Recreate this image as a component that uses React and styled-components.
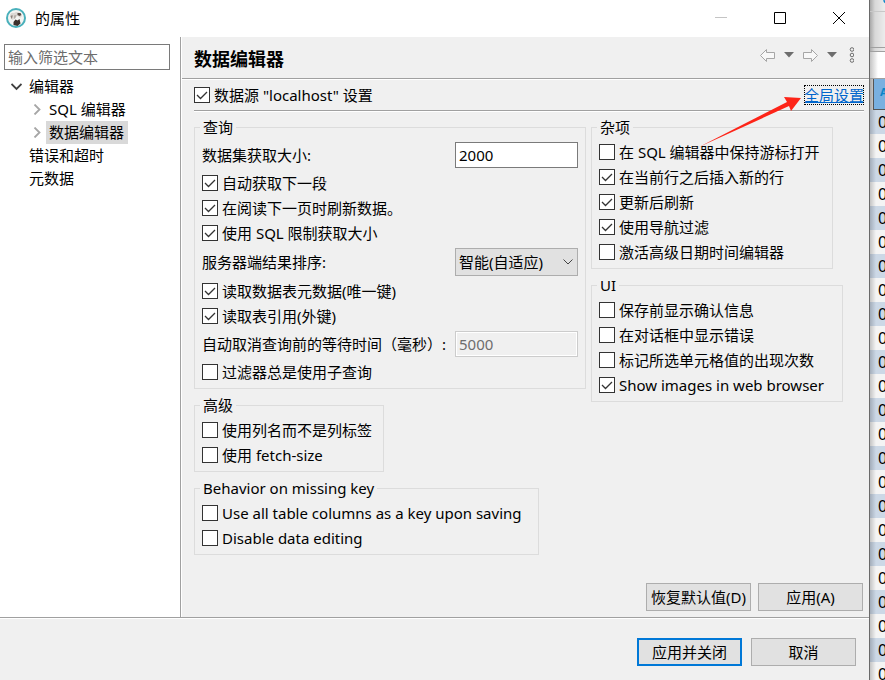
import React, { useState } from 'react';
import styled, { createGlobalStyle, css } from 'styled-components';

const GlobalStyle = createGlobalStyle`
* {
    box-sizing: border-box;
}

body {
    margin: 0;
    background: #f0f0f0;
    color: #000;
    font: 15px/20px "Noto Sans", "Noto Sans CJK SC", sans-serif;
}

button, input, select {
    font: inherit;
    color: inherit;
}
`;

const Desktop = styled.div`
display: flex;
min-height: 100vh;
overflow: hidden;
`;

const Dialog = styled.div`
position: relative;
display: flex;
flex-direction: column;
flex: 1;
min-width: 0;
background: #f0f0f0;
`;

const TitleBar = styled.header`
display: flex;
align-items: center;
height: 37px;
padding: 0 1px 2px 6px;
background: #fff;

h1 {
    flex: 1;
    margin: 0 0 0 9px;
    font-size: 15px;
    font-weight: 400;
}
`;

const WindowButton = styled.button`
display: flex;
align-items: center;
justify-content: center;
width: 59px;
height: 34px;
padding: 0;
border: 0;
background: none;
`;

const Body = styled.div`
display: flex;
flex: 1;
border-bottom: 1px solid #a0a0a0;
`;

const Sidebar = styled.aside`
flex: 0 0 181px;
padding: 7px 10px 0 4px;
border-right: 1px solid #a0a0a0;
background: #fff;
`;

const Filter = styled.input`
display: block;
width: 100%;
height: 26px;
padding: 0 3px;
border: 1px solid #7a7a7a;
background: #fff;

&::placeholder {
    color: #6d6d6d;
    opacity: 1;
}
`;

const Tree = styled.ul`
margin: 0;
padding: 5px 0 0;
list-style: none;

ul {
    padding: 0 0 0 20px;
}
`;

const TreeItem = styled.li`
display: flex;
align-items: center;
height: 23px;

svg {
    width: 11px;
    margin: 0 6px 0 7px;
}
`;

const TreeLabel = styled.span`
padding: 0 4px 0 3px;
line-height: 23px;
margin-left: ${props => (props.$leaf ? '22px' : '-2px')};
background: ${props => (props.$selected ? '#d9d9d9' : 'none')};
`;

const Page = styled.main`
display: flex;
flex-direction: column;
flex: 1;
min-width: 0;
border-left: 1px solid #fff;
`;

const PageHead = styled.div`
display: flex;
align-items: center;
justify-content: space-between;
height: 43px;
padding: 0 15px 0 12px;
border-bottom: 1px solid #fff;
box-shadow: inset 0 -1px #a0a0a0;

h2 {
    margin: 0;
    padding-top: 2px;
    font-size: 18px;
    line-height: 24px;
}
`;

const History = styled.div`
display: flex;
align-items: center;
gap: 9px;
padding-bottom: 6px;

button {
    display: flex;
    padding: 0;
    border: 0;
    background: none;
}
`;

const Scope = styled.div`
display: flex;
align-items: center;
justify-content: space-between;
height: 32px;
margin: 0 5px 0 12px;
padding-bottom: 2px;
border-bottom: 1px solid #fff;
box-shadow: inset 0 -1px #a0a0a0;
`;

const GlobalLink = styled.a`
outline: 1px dotted #000;
outline-offset: -1px;
line-height: 20px;
color: #0066cc;
`;

const Columns = styled.div`
display: flex;
align-items: flex-start;
gap: 5px;
padding: 5px 5px 0 12px;
`;

const Column = styled.div`
display: flex;
flex-direction: column;
align-items: ${props => (props.$wide ? 'stretch' : 'flex-start')};
gap: 6px;
flex: ${props => (props.$wide ? '0 0 392px' : '0 1 auto')};
min-width: 0;
`;

const GroupBox = styled.fieldset`
align-self: ${props => (props.$fill ? 'stretch' : 'flex-start')};
min-width: ${props => props.$min || 0}px;
margin: 0;
padding: 4px 7px 6px;
border: 1px solid #dcdcdc;

legend {
    margin-left: -2px;
    padding: 0 3px;
    line-height: 21px;
}
`;

const Options = styled.div`
display: flex;
flex-direction: column;
gap: 5px;
`;

const CheckRow = styled.label`
display: flex;
align-items: center;
gap: 4px;
height: 20px;
padding-right: 4px;
white-space: nowrap;
`;

const Box = styled.input`
appearance: none;
flex: none;
width: 16px;
height: 16px;
margin: 0;
border: 1px solid #333;
background: #fff;

&:checked {
    background: #fff url("data:image/svg+xml,%3Csvg xmlns='http://www.w3.org/2000/svg' viewBox='0 0 14 14'%3E%3Cpath d='M2 7l3.5 3.5L12 4' fill='none' stroke='%23333' stroke-width='1.3'/%3E%3C/svg%3E");
}
`;

const Field = styled.div`
display: flex;
align-items: center;
justify-content: space-between;
white-space: nowrap;
`;

const Text = styled.input`
width: 123px;
height: 26px;
padding: 0 3px;
border: 1px solid #7a7a7a;
background: #fff;

&:disabled {
    border-color: #ccc;
    box-shadow: inset 0 0 0 1px #fff;
    background: #f0f0f0;
    color: #6d6d6d;
}
`;

const Combo = styled.div`
display: grid;
align-items: center;
width: 123px;

select, svg {
    grid-area: 1 / 1;
}

select {
    appearance: none;
    width: 100%;
    height: 28px;
    padding: 0 3px;
    border: 1px solid #adadad;
    border-radius: 0;
    background: #e1e1e1;
}

svg {
    justify-self: end;
    margin-right: 5px;
    pointer-events: none;
}
`;

const Actions = styled.div`
display: flex;
justify-content: flex-end;
gap: ${props => (props.$footer ? '9px' : '7px')};
margin-top: ${props => (props.$footer ? '0' : 'auto')};
padding: ${props => (props.$footer ? '19px 13px 14px' : '0 6px 6px')};
border-top: ${props => (props.$footer ? '1px solid #fff' : '0')};
`;

const Button = styled.button`
min-width: 105px;
height: 28px;
padding: 0 4px 1px;
border: 1px solid #adadad;
background: #e1e1e1;
white-space: nowrap;

${props => props.$primary && css`
border: 2px solid #0078d7;
`}
`;

const Arrow = styled.svg`
position: absolute;
top: 92px;
right: 66px;
width: 108px;
height: 60px;
pointer-events: none;
`;

const Behind = styled.div`
flex: 0 0 16px;
height: 100vh;
overflow: hidden;
border-left: 1px solid #6a6a6a;
background: linear-gradient(90deg, #a8a8a8, #d8d8d8 5px, #ececec 15px);
`;

const BehindBar = styled.div`
height: ${props => props.$height}px;
padding-left: 13px;
border-bottom: 1px solid ${props => props.$line || '#a0a0a0'};
background: ${props => props.$fill || 'none'};

svg {
    display: block;
}
`;

const ColumnHead = styled.div`
height: 31px;
margin-left: 3px;
padding: 3px 0 0 6px;
border-left: 1px solid #555;
border-bottom: 1px solid #555;
background: #79b0e0;
color: #0a84c8;
font-size: 11px;
font-weight: 700;
`;

const Cell = styled.div`
height: 24px;
padding-left: 8px;
font-size: 16px;
line-height: 24px;
background: ${props => (props.$odd
        ? 'linear-gradient(90deg, #c4c4c4, #f4f4f4 6px)'
        : 'linear-gradient(90deg, #a3adba, #ccd8e6 6px)')};
`;

const Check = ({ label, on }) => {
    const [checked, setChecked] = useState(!!on);
    return (
        <CheckRow>
            <Box type="checkbox" checked={checked} onChange={() => setChecked(!checked)} />
            {label}
        </CheckRow>
    );
};

const Group = ({ title, fill, min, children }) => (
    <GroupBox $fill={fill} $min={min}>
        <legend>{title}</legend>
        <Options>{children}</Options>
    </GroupBox>
);

const Chevron = ({ open }) => (
    <svg viewBox="0 0 11 11" height="11" fill="none" stroke={open ? '#404040' : '#a6a6a6'} strokeWidth="1.8">
        <path d={open ? 'M0.5 3L5.5 8l5-5' : 'M3.5 0.5l5 5-5 5'} />
    </svg>
);

const Logo = () => (
    <svg width="20" height="20" viewBox="0 0 20 20">
        <circle cx="10" cy="10" r="9" fill="#f4f4f2" stroke="#49b0bb" strokeWidth="2" />
        <path d="M4 7Q5 4 8 5Q11 3 14 5L16 8L14 10L12 8L9 9L7 12L5 11Z" fill="#dcd8d4" />
        <path d="M11.5 5l3 0 1 2-2 1-2-1z" fill="#5a4c46" />
        <path d="M4.500 8l2-1 0 2-1 2z" fill="#8a807a" />
        <path d="M7.500 14l2-2.500 2 1 2-1.500 1 4.500-3 2.500-4-1z" fill="#3c302c" />
        <path d="M8 7.500l2.500-0.500-1 3-1.500 1z" fill="#b4aca6" />
    </svg>
);

const HistoryArrow = ({ forward }) => (
    <svg width="15" height="13" viewBox="0 0 15 13" fill="#f8f8f8" stroke="#a6a6a6" strokeLinejoin="round">
        <path d={forward ? 'M14.5 6.5L8.500 0.500v3H0.500v6h8v3z' : 'M0.500 6.5L6.500 0.500v3h8v6h-8v3z'} />
    </svg>
);

const Caret = () => (
    <svg width="10" height="6" viewBox="0 0 10 6">
        <path d="M0 0h10L5 5.5z" fill="#6d6d6d" />
    </svg>
);

export default function App() {
    return (
        <Desktop>
            <GlobalStyle />
            <Dialog>
                <TitleBar>
                    <Logo />
                    <h1>的属性</h1>
                    <WindowButton aria-label="最小化">
                        <svg width="12" height="12" viewBox="0 0 12 12"><path d="M0 5.5h12" stroke="#c4c4c4" /></svg>
                    </WindowButton>
                    <WindowButton aria-label="最大化">
                        <svg width="12" height="12" viewBox="0 0 12 12"><path d="M0.5 0.5h11v11H0.5z" fill="none" stroke="#000" /></svg>
                    </WindowButton>
                    <WindowButton aria-label="关闭">
                        <svg width="12" height="12" viewBox="0 0 12 12"><path d="M0 0l12 12M12 0L0 12" stroke="#000" /></svg>
                    </WindowButton>
                </TitleBar>

                <Body>
                    <Sidebar>
                        <Filter aria-label="输入筛选文本" placeholder="输入筛选文本" />
                        <Tree>
                            <TreeItem><Chevron open /><TreeLabel>编辑器</TreeLabel></TreeItem>
                            <li>
                                <Tree as="ul">
                                    <TreeItem><Chevron /><TreeLabel>SQL 编辑器</TreeLabel></TreeItem>
                                    <TreeItem><Chevron /><TreeLabel $selected>数据编辑器</TreeLabel></TreeItem>
                                </Tree>
                            </li>
                            <TreeItem><TreeLabel $leaf>错误和超时</TreeLabel></TreeItem>
                            <TreeItem><TreeLabel $leaf>元数据</TreeLabel></TreeItem>
                        </Tree>
                    </Sidebar>

                    <Page>
                        <PageHead>
                            <h2>数据编辑器</h2>
                            <History>
                                <button aria-label="后退"><HistoryArrow /></button>
                                <button aria-label="后退历史"><Caret /></button>
                                <button aria-label="前进"><HistoryArrow forward /></button>
                                <button aria-label="前进历史"><Caret /></button>
                                <button aria-label="菜单">
                                    <svg width="8" height="16" viewBox="0 0 8 16" fill="none" stroke="#6d6d6d">
                                        <circle cx="6" cy="2.5" r="1.8" />
                                        <circle cx="6" cy="8" r="1.8" />
                                        <circle cx="6" cy="13.5" r="1.8" />
                                    </svg>
                                </button>
                            </History>
                        </PageHead>

                        <Scope>
                            <Check on label={'数据源 "localhost" 设置'} />
                            <GlobalLink href="#global">全局设置</GlobalLink>
                        </Scope>

                        <Columns>
                            <Column $wide>
                                <Group title="查询" fill>
                                    <Field>
                                        <label htmlFor="fetch">数据集获取大小:</label>
                                        <Text id="fetch" defaultValue="2000" />
                                    </Field>
                                    <Check on label="自动获取下一段" />
                                    <Check on label="在阅读下一页时刷新数据。" />
                                    <Check on label="使用 SQL 限制获取大小" />
                                    <Field>
                                        <label htmlFor="order">服务器端结果排序:</label>
                                        <Combo>
                                            <select id="order">
                                                <option>智能(自适应)</option>
                                            </select>
                                            <svg width="10" height="6" viewBox="0 0 10 6" fill="none" stroke="#444">
                                                <path d="M0.5 0.5L5 5l4.5-4.5" />
                                            </svg>
                                        </Combo>
                                    </Field>
                                    <Check on label="读取数据表元数据(唯一键)" />
                                    <Check on label="读取表引用(外键)" />
                                    <Field>
                                        <label htmlFor="wait">自动取消查询前的等待时间（毫秒）:</label>
                                        <Text id="wait" defaultValue="5000" disabled />
                                    </Field>
                                    <Check label="过滤器总是使用子查询" />
                                </Group>
                                <Group title="高级">
                                    <Check label="使用列名而不是列标签" />
                                    <Check label="使用 fetch-size" />
                                </Group>
                                <Group title="Behavior on missing key" min={345}>
                                    <Check label="Use all table columns as a key upon saving" />
                                    <Check label="Disable data editing" />
                                </Group>
                            </Column>

                            <Column>
                                <Group title="杂项" min={242}>
                                    <Check label="在 SQL 编辑器中保持游标打开" />
                                    <Check on label="在当前行之后插入新的行" />
                                    <Check on label="更新后刷新" />
                                    <Check on label="使用导航过滤" />
                                    <Check label="激活高级日期时间编辑器" />
                                </Group>
                                <Group title="UI" min={252}>
                                    <Check label="保存前显示确认信息" />
                                    <Check label="在对话框中显示错误" />
                                    <Check label="标记所选单元格值的出现次数" />
                                    <Check on label="Show images in web browser" />
                                </Group>
                            </Column>
                        </Columns>

                        <Actions>
                            <Button>恢复默认值(D)</Button>
                            <Button>应用(A)</Button>
                        </Actions>
                    </Page>
                </Body>

                <Actions $footer>
                    <Button $primary>应用并关闭</Button>
                    <Button>取消</Button>
                </Actions>

                <Arrow viewBox="0 0 108 60">
                    <path d="M4 55L92 10L89 5L106 6L96 19L94 14Z" fill="#fd2418" />
                </Arrow>
            </Dialog>

            <Behind aria-hidden="true">
                <BehindBar $height={12} $line="#c8c8c8">
                    <svg width="4" height="5" viewBox="0 0 4 5">
                        <circle cx="4" cy="0" r="3" fill="none" stroke="#0a84c8" strokeWidth="1.5" />
                    </svg>
                </BehindBar>
                <BehindBar $height={36} />
                <BehindBar $height={4} />
                <BehindBar $height={27} $fill="linear-gradient(90deg, #c4c4c4, #fff 8px)" />
                <ColumnHead>A</ColumnHead>
                {Array.from({ length: 24 }, (_, i) => (
                    <Cell key={i} $odd={i % 2 === 1}>0</Cell>
                ))}
            </Behind>
        </Desktop>
    );
}
